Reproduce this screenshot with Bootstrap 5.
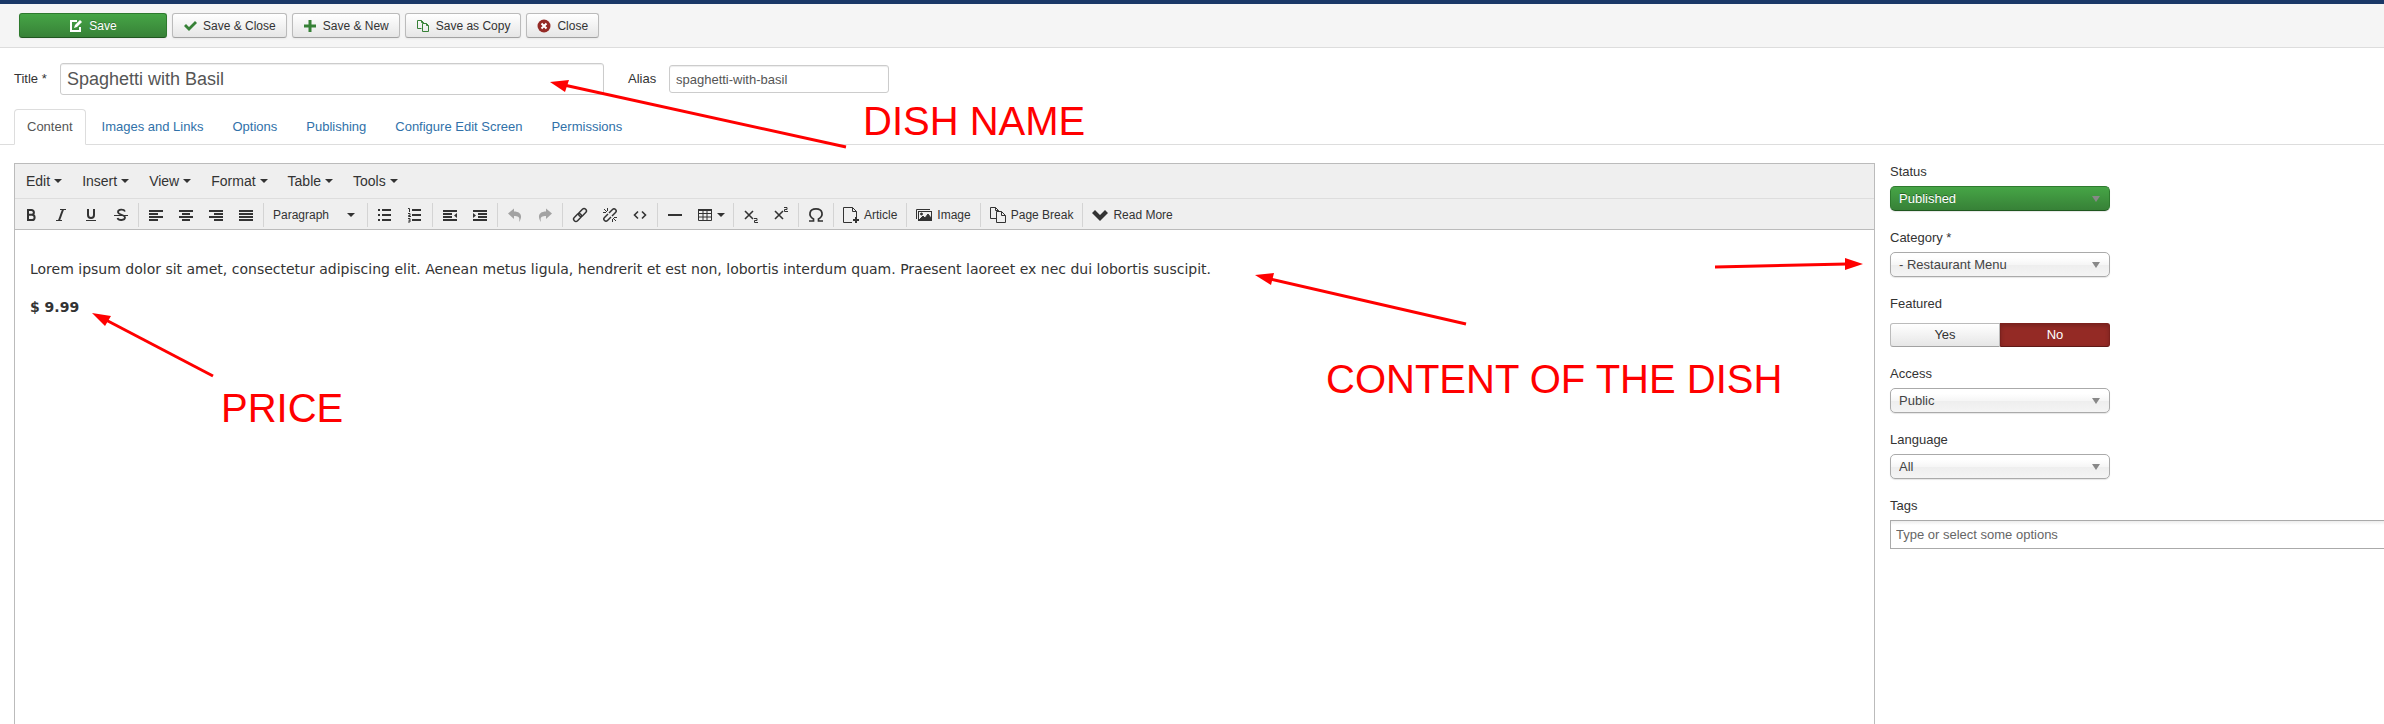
<!DOCTYPE html>
<html lang="en">
<head>
<meta charset="utf-8">
<meta name="viewport" content="width=device-width, initial-scale=1">
<title>Edit article</title>
<link rel="stylesheet" href="https://cdn.jsdelivr.net/npm/bootstrap@5.3.0/dist/css/bootstrap.min.css">
<style>
body{font-family:"Liberation Sans",Arial,sans-serif;font-size:13px;line-height:18px;color:#333;background:#fff;min-height:100vh;overflow-x:hidden}
.topline{height:4px;background:#1a3867}
.actions{background:#f5f5f5;border-bottom:1px solid #ddd;padding:9px 19px;gap:5px}
.tool-btn{display:inline-flex;align-items:center;justify-content:center;height:25px;padding:0 10px;gap:6px;font-size:12px;line-height:18px;color:#333;border:1px solid #bbb;border-bottom-color:#a2a2a2;border-radius:3px;background:linear-gradient(#fff,#e6e6e6);box-shadow:0 1px 2px rgba(0,0,0,.05)}
.tool-btn svg{width:14px;height:14px}
.save-btn{width:148px;color:#fff;border-color:#2e7a2e #2e7a2e #1f561f;background:linear-gradient(#46a546,#378137);text-shadow:0 -1px 0 rgba(0,0,0,.25)}
.title-row{padding:15px 14px 0;min-height:47px}
.title-cap{width:46px}
.alias-cap{width:41px;margin-left:24px}
.field{border:1px solid #ccc;border-radius:3px;color:#555;padding:0 6px;box-shadow:inset 0 1px 1px rgba(0,0,0,.075);background:#fff}
.title-field{width:544px;height:32px;font-size:18px}
.alias-field{width:220px;height:28px;font-size:13px}
.edit-tabs{padding-left:14px;margin-top:14px;border-bottom:1px solid #ddd}
.edit-tabs .nav-link{padding:8px 12px;margin-right:3px;border-radius:4px 4px 0 0;color:#3071a9;line-height:18px}
.edit-tabs .nav-link.active{color:#555;border-color:#ddd #ddd #fff}
.work{padding-left:14px;margin-top:18px;gap:15px}
.editor{border:1px solid #bbb;border-bottom:0;min-width:0}
.menus{height:35px;padding-left:1px;background:#efefef;border-bottom:1px solid #ddd}
.menus button{border:0;background:none;padding:0 10px;font-size:14px;color:#333;display:flex;align-items:center;gap:4px}
.down{border:4px solid transparent;border-top-color:#333;border-bottom:0;width:8px;height:4px}
.tools{min-height:31px;padding:2px 0 0 1px;background:#efefef;border-bottom:1px solid #bbb}
.tgroup{height:24px}
.tgroup + .tgroup{border-left:1px solid #d4d4d4;padding-left:2px;margin-left:2px}
.tgroup button{border:0;background:none;padding:0;height:24px;width:30px;font-size:12px;color:#333;display:flex;align-items:center;justify-content:center}
.tgroup button.wide{width:auto;padding:0 7px;gap:5px;white-space:nowrap}
.tgroup button.para{width:99px;padding:0 10px 0 7px;justify-content:space-between}
.tgroup button.tbl{width:41px;gap:4px}
.tgroup svg{width:16px;height:16px;flex:none}
.faded{opacity:.4}
.page-text{font-family:"DejaVu Sans",Verdana,sans-serif;font-size:14px;line-height:20px;padding:29px 15px}
.page-text p{margin-bottom:18px}
.side{width:494px;flex:none}
.side-item{min-height:66px}
.side-item .cap{display:block;margin-bottom:5px}
.pick{appearance:none;display:block;width:220px;height:25px;padding:0 8px;font-size:13px;color:#444;border:1px solid #aaa;border-radius:5px;background:linear-gradient(#fff 20%,#f6f6f6 50%,#eee 52%,#f4f4f4);box-shadow:0 1px 1px rgba(0,0,0,.1)}
.pick.on{color:#fff;border-color:#2e7a2e #2e7a2e #1f561f;background:linear-gradient(#46a546,#378137);text-shadow:0 -1px 0 rgba(0,0,0,.4)}
.pick-wrap{position:relative;width:220px}
.pick-wrap::after{content:"";position:absolute;right:10px;top:10px;border:4px solid transparent;border-top:6px solid #888;border-bottom:0;pointer-events:none}
.yesno{width:220px;margin-top:10px;padding-bottom:18px}
.yesno label{flex:1;height:24px;display:flex;align-items:center;justify-content:center;border:1px solid #bbb;border-bottom-color:#a2a2a2;background:linear-gradient(#fff,#e6e6e6);border-radius:3px 0 0 3px}
.yesno label:last-child{border-radius:0 3px 3px 0}
.yesno input:checked + .no{color:#fff;background:#942a25;border-color:#7c211d #7c211d #5f1916;box-shadow:inset 0 2px 4px rgba(0,0,0,.2)}
.tags{display:block;width:100%;height:29px;border:1px solid #aaa;border-right:0;padding:0 5px;font-size:13px;background:linear-gradient(#eee 1%,#fff 15%)}
.tags::placeholder{color:#666;opacity:1}
.notes{position:absolute;inset:0;width:100%;height:100%;pointer-events:none;fill:red;font-size:40px}
.notes line{stroke:red;stroke-width:3}
</style>
<script src="https://cdn.jsdelivr.net/npm/bootstrap@5.3.0/dist/js/bootstrap.bundle.min.js"></script>
</head>
<body class="d-flex flex-column position-relative">
<div class="topline"></div>
<div class="actions d-flex flex-wrap">
  <button class="tool-btn save-btn"><svg viewBox="0 0 14 14" fill="none" stroke="#fff" stroke-width="2"><path d="M8 2H2v10h9V8"/><path d="M5 9l1-3 5-5 2 2-5 5z" fill="#fff" stroke="none"/></svg>Save</button>
  <button class="tool-btn"><svg viewBox="0 0 14 14"><path d="M1 7l2-2 3 3 6-6 2 2-8 8z" fill="#378137"/></svg>Save &amp; Close</button>
  <button class="tool-btn"><svg viewBox="0 0 14 14"><path d="M5.500 1h3v4.500H13v3H8.500V13h-3V8.500H1v-3h4.500z" fill="#378137"/></svg>Save &amp; New</button>
  <button class="tool-btn"><svg viewBox="0 0 14 14" fill="none" stroke="#378137"><path d="M5.500 9.500h-4v-8h4l2 2V5M5.500 1.500v2h2M6.500 4.500h4l2 2v6h-6zM10.500 4.500v2h2"/></svg>Save as Copy</button>
  <button class="tool-btn"><svg viewBox="0 0 14 14"><circle cx="7" cy="7" r="6.500" fill="#942a25"/><path d="M4.500 4.500l5 5m0-5l-5 5" stroke="#fff" stroke-width="2"/></svg>Close</button>
</div>
<div class="title-row d-flex align-items-center">
  <label for="title" class="title-cap">Title *</label><input class="field title-field" id="title" value="Spaghetti with Basil">
  <label for="alias" class="alias-cap">Alias</label><input class="field alias-field" id="alias" value="spaghetti-with-basil">
</div>
<nav class="nav nav-tabs edit-tabs">
  <a class="nav-link active" href="#">Content</a><a class="nav-link" href="#">Images and Links</a><a class="nav-link" href="#">Options</a><a class="nav-link" href="#">Publishing</a><a class="nav-link" href="#">Configure Edit Screen</a><a class="nav-link" href="#">Permissions</a>
</nav>
<main class="work d-flex flex-grow-1">
  <section class="editor flex-grow-1">
    <div class="menus d-flex">
      <button>Edit<i class="down"></i></button><button>Insert<i class="down"></i></button><button>View<i class="down"></i></button><button>Format<i class="down"></i></button><button>Table<i class="down"></i></button><button>Tools<i class="down"></i></button>
    </div>
    <div class="tools d-flex flex-wrap align-items-center">
      <div class="tgroup d-flex">
        <button aria-label="Bold"><svg viewBox="0 0 16 16" fill="none" stroke="#333" stroke-width="2"><path d="M5 3h3.500a2.300 2.300 0 0 1 0 4.800H5zM5 7.800h4a2.600 2.600 0 0 1 0 5.200H5z"/></svg></button>
        <button aria-label="Italic"><svg viewBox="0 0 16 16" fill="none" stroke="#333"><path d="M7 2.500h6M3 13.500h6"/><path d="M10 2.500l-4 11" stroke-width="2"/></svg></button>
        <button aria-label="Underline"><svg viewBox="0 0 16 16" fill="none" stroke="#333"><path d="M5 2v6a3 3 0 0 0 6 0V2" stroke-width="2"/><path d="M3 13.500h10"/></svg></button>
        <button aria-label="Strikethrough"><svg viewBox="0 0 16 16" fill="none" stroke="#333"><path d="M12 4.500C11 2 5 2 5 5s7 2.500 7 5.500-6.500 3.500-7.500.5" stroke-width="1.800"/><path d="M1 8.500h14"/></svg></button>
      </div>
      <div class="tgroup d-flex">
        <button aria-label="Align left"><svg viewBox="0 0 16 16" stroke="#333" stroke-width="2"><path d="M1 4h14M1 7h9M1 10h14M1 13h9"/></svg></button>
        <button aria-label="Align center"><svg viewBox="0 0 16 16" stroke="#333" stroke-width="2"><path d="M1 4h14M4 7h8M1 10h14M4 13h8"/></svg></button>
        <button aria-label="Align right"><svg viewBox="0 0 16 16" stroke="#333" stroke-width="2"><path d="M1 4h14M6 7h9M1 10h14M6 13h9"/></svg></button>
        <button aria-label="Justify"><svg viewBox="0 0 16 16" stroke="#333" stroke-width="2"><path d="M1 4h14M1 7h14M1 10h14M1 13h14"/></svg></button>
      </div>
      <div class="tgroup d-flex"><button class="para">Paragraph<i class="down"></i></button></div>
      <div class="tgroup d-flex">
        <button aria-label="Bullet list"><svg viewBox="0 0 16 16" stroke="#333" stroke-width="2"><path d="M1 3h2M1 8h2M1 13h2M5 3h9M5 8h9M5 13h9"/></svg></button>
        <button aria-label="Numbered list"><svg viewBox="0 0 16 16" fill="none" stroke="#333"><path d="M5 3h9M5 8h9M5 13h9" stroke-width="2"/><path d="M1 1.500h1.500V5M1 6.500h2v2H1.500v1H4M1 11.500h2v3.500H1M1.500 13.200H3"/></svg></button>
      </div>
      <div class="tgroup d-flex">
        <button aria-label="Outdent"><svg viewBox="0 0 16 16" stroke="#333" stroke-width="2"><path d="M1 4h14M1 7h9M1 10h9M1 13h14"/><path d="M15 6v5l-3-2.500z" fill="#333" stroke="none"/></svg></button>
        <button aria-label="Indent"><svg viewBox="0 0 16 16" stroke="#333" stroke-width="2"><path d="M1 4h14M6 7h9M6 10h9M1 13h14"/><path d="M1 6v5l3-2.500z" fill="#333" stroke="none"/></svg></button>
      </div>
      <div class="tgroup d-flex">
        <button class="faded" aria-label="Undo"><svg viewBox="0 0 16 16"><path d="M1 6.500L7 1.500v3c7 0 9 5 5 10.500 1-4.500 0-6-5-6v3z" fill="#333"/></svg></button>
        <button class="faded" aria-label="Redo"><svg viewBox="0 0 16 16"><path d="M15 6.500L9 1.500v3C2 4.500 0 9.500 4 15 3 10.500 4 9 9 9v3z" fill="#333"/></svg></button>
      </div>
      <div class="tgroup d-flex">
        <button aria-label="Link"><svg viewBox="0 0 16 16" fill="none" stroke="#333" stroke-width="1.500"><rect x="-4.500" y="-2.300" width="9" height="4.600" rx="2.300" transform="translate(5.500 10.500) rotate(-45)"/><rect x="-4.500" y="-2.300" width="9" height="4.600" rx="2.300" transform="translate(10.500 5.500) rotate(-45)"/></svg></button>
        <button aria-label="Remove link"><svg viewBox="0 0 16 16" fill="none" stroke="#333" stroke-width="1.500"><path d="M6 7L2.500 10.500a2 2 0 0 0 3 3L9 10M7 6l3.500-3.500a2 2 0 0 1 3 3L10 9"/><path d="M5.500 1v3M2 2l3 3M1 5.500h3M10.500 12v3M11 11l3 3M12 10.500h3" stroke-width="1"/></svg></button>
        <button aria-label="Source code"><svg viewBox="0 0 16 16" fill="none" stroke="#333" stroke-width="1.600"><path d="M6 4.500L2.500 8 6 11.500M10 4.500L13.500 8 10 11.500"/></svg></button>
      </div>
      <div class="tgroup d-flex">
        <button aria-label="Horizontal line"><svg viewBox="0 0 16 16" stroke="#333" stroke-width="2"><path d="M1 8h14"/></svg></button>
        <button class="tbl" aria-label="Table"><svg viewBox="0 0 16 16" fill="none" stroke="#333"><path d="M1 3h14" stroke-width="2"/><path d="M1.500 3v10.500h13V3M1 6.500h14M1 10h14M6 3v10M10 3v10"/></svg><i class="down"></i></button>
      </div>
      <div class="tgroup d-flex">
        <button aria-label="Subscript"><svg viewBox="0 0 16 16" fill="none" stroke="#333"><path d="M2 4l8 8M10 4l-8 8" stroke-width="1.600"/><path d="M11 11.500h3v2h-2.500v2H15"/></svg></button>
        <button aria-label="Superscript"><svg viewBox="0 0 16 16" fill="none" stroke="#333"><path d="M2 4l8 8M10 4l-8 8" stroke-width="1.600"/><path d="M11 .5h3v2h-2.500v2H15"/></svg></button>
      </div>
      <div class="tgroup d-flex"><button aria-label="Special character"><svg viewBox="0 0 16 16" fill="none" stroke="#333" stroke-width="1.700"><path d="M1 14h4.500v-2C0 9 1 1.800 8 1.800S16 9 10.500 12v2H15"/></svg></button></div>
      <div class="tgroup d-flex"><button class="wide"><svg viewBox="0 0 16 16" fill="none" stroke="#333"><path d="M9 15.500H.5V.5h9l4 4V10M9.500.5v4h4"/><path d="M13 10v6M10 13h6" stroke-width="2"/></svg>Article</button></div>
      <div class="tgroup d-flex"><button class="wide"><svg viewBox="0 0 16 16" fill="none" stroke="#333"><path d="M.5 12V2.500H14"/><rect x="2.500" y="4.500" width="13" height="9"/><path d="M3 13l4-4 2 2 3-4 3 4v2z" fill="#333"/><circle cx="5.500" cy="7" r="1" fill="#333"/></svg>Image</button></div>
      <div class="tgroup d-flex"><button class="wide"><svg viewBox="0 0 16 16" fill="none" stroke="#333"><path d="M6.500 11.500h-6V.5h5l3 3v1M5.500.5v3h3M6.500 4.500h5l4 4v7h-9zM11.500 4.500v4h4"/></svg>Page Break</button></div>
      <div class="tgroup d-flex"><button class="wide"><svg viewBox="0 0 16 16"><path d="M0 6l3-3 5 5 5-5 3 3-8 8z" fill="#333"/></svg>Read More</button></div>
    </div>
    <div class="page-text">
      <p>Lorem ipsum dolor sit amet, consectetur adipiscing elit. Aenean metus ligula, hendrerit et est non, lobortis interdum quam. Praesent laoreet ex nec dui lobortis suscipit.</p>
      <p><strong>$ 9.99</strong></p>
    </div>
  </section>
  <aside class="side">
    <div class="side-item"><label class="cap" for="status">Status</label><div class="pick-wrap"><select class="pick on" id="status"><option>Published</option></select></div></div>
    <div class="side-item"><label class="cap" for="cat">Category *</label><div class="pick-wrap"><select class="pick" id="cat"><option>- Restaurant Menu</option></select></div></div>
    <div class="side-item" role="group" aria-labelledby="feat"><span class="cap" id="feat">Featured</span>
      <div class="yesno d-flex"><input class="btn-check" type="radio" name="f" id="fy"><label for="fy">Yes</label><input class="btn-check" type="radio" name="f" id="fn" checked><label class="no" for="fn">No</label></div></div>
    <div class="side-item"><label class="cap" for="access">Access</label><div class="pick-wrap"><select class="pick" id="access"><option>Public</option></select></div></div>
    <div class="side-item"><label class="cap" for="lang">Language</label><div class="pick-wrap"><select class="pick" id="lang"><option>All</option></select></div></div>
    <div class="side-item"><label class="cap" for="tags">Tags</label><input class="tags" id="tags" placeholder="Type or select some options"></div>
  </aside>
</main>
<svg class="notes">
  <line x1="846" y1="147" x2="564" y2="85"/><path d="M550 82l19-2-4 12z"/>
  <line x1="213" y1="376" x2="106" y2="320"/><path d="M92 313l19 3-6 10z"/>
  <line x1="1466" y1="324" x2="1270" y2="279"/><path d="M1255 275l19-2-3 12z"/>
  <line x1="1715" y1="267" x2="1847" y2="264"/><path d="M1863 264l-18-6v12z"/>
  <text x="863" y="135">DISH NAME</text>
  <text x="221" y="422">PRICE</text>
  <text x="1326" y="393">CONTENT OF THE DISH</text>
</svg>
</body>
</html>
